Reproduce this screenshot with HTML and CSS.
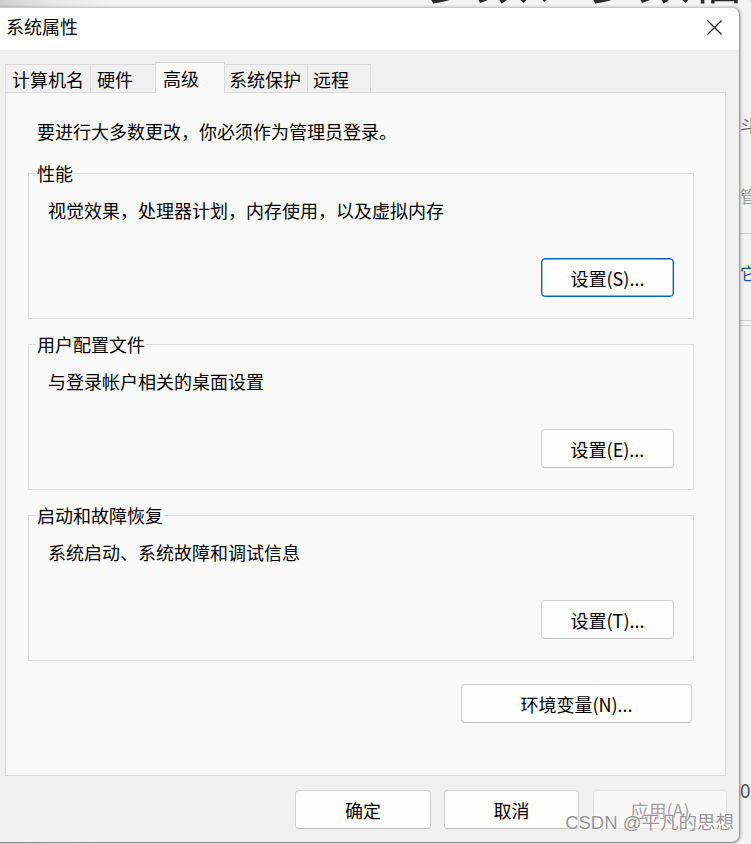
FILE: index.html
```html
<!DOCTYPE html>
<html lang="zh-CN">
<head>
<meta charset="utf-8">
<title>系统属性</title>
<link rel="stylesheet" href="styles.css">
</head>
<body>
<div class="desk">
  <div class="bg-heading">参数、参数信息</div>
  <div class="bg-frag frag-a">斗 目</div>
  <div class="bg-frag frag-b">管</div>
  <div class="bg-line line-a"></div>
  <div class="bg-frag frag-c">它</div>
  <div class="bg-line line-b"></div>
  <div class="bg-line line-c"></div>
  <div class="bg-frag frag-d">0</div>

  <div class="dialog">
    <div class="titlebar">
      <span class="title">系统属性</span>
      <svg class="close" width="15" height="15" viewBox="0 0 15 15"><path d="M0.5 0.5L14.5 14.5M14.5 0.5L0.5 14.5" stroke="#111" stroke-width="1.2" fill="none"/></svg>
    </div>
    <div class="tabs">
      <div class="tab t1">计算机名</div>
      <div class="tab t2">硬件</div>
      <div class="tab t3 active">高级</div>
      <div class="tab t4">系统保护</div>
      <div class="tab t5">远程</div>
    </div>
    <div class="panel">
      <p class="intro">要进行大多数更改，你必须作为管理员登录。</p>
      <fieldset class="group">
        <legend>性能</legend>
        <p class="desc">视觉效果，处理器计划，内存使用，以及虚拟内存</p>
        <button class="btn btn-set default">设置(S)...</button>
      </fieldset>
      <fieldset class="group">
        <legend>用户配置文件</legend>
        <p class="desc">与登录帐户相关的桌面设置</p>
        <button class="btn btn-set">设置(E)...</button>
      </fieldset>
      <fieldset class="group">
        <legend>启动和故障恢复</legend>
        <p class="desc">系统启动、系统故障和调试信息</p>
        <button class="btn btn-set">设置(T)...</button>
      </fieldset>
      <button class="btn btn-env">环境变量(N)...</button>
    </div>
    <div class="footer">
      <button class="btn btn-ok">确定</button>
      <button class="btn btn-cancel">取消</button>
      <button class="btn btn-apply" disabled>应用(A)</button>
    </div>
    <div class="watermark">CSDN @平凡的思想</div>
  </div>
</div>
</body>
</html>
```

FILE: styles.css
```css
html, body {
  margin: 0;
  padding: 0;
}
body {
  width: 751px;
  height: 844px;
  overflow: hidden;
  background: #efefef;
  font-family: "Noto Sans CJK SC", "Noto Sans", sans-serif;
  color: #000;
}
.desk {
  position: relative;
  width: 751px;
  height: 844px;
  overflow: hidden;
  background: linear-gradient(to right, #d0d0d0 0, #e9e9e9 55px, #f3f3f3 110px, #f3f3f3 100%);
}
.bg-heading {
  position: absolute;
  left: 422px;
  top: -49px;
  font-size: 52px;
  line-height: 52px;
  color: #2a2a2a;
  white-space: nowrap;
  letter-spacing: 2px;
}
.bg-frag {
  position: absolute;
  left: 740px;
  font-size: 17px;
  line-height: 22px;
  white-space: nowrap;
}
.frag-a { top: 114px; color: #6a6a6a; }
.frag-b { top: 185px; color: #9a9a9a; }
.frag-c { top: 262px; color: #1f4f9a; }
.frag-d { top: 779px; color: #555; font-size: 19px; }
.bg-line {
  position: absolute;
  left: 740px;
  width: 11px;
  height: 1px;
  background: #cfcfcf;
}
.line-a { top: 233px; }
.line-b { top: 320px; }
.line-c { top: 325px; }

.dialog {
  position: absolute;
  left: -1px;
  top: 7px;
  width: 741px;
  height: 836px;
  box-sizing: border-box;
  border: 1px solid #c8c8c8;
  border-right-color: #9c9c9c;
  border-bottom-color: #8e8e8e;
  border-radius: 0 8px 8px 0;
  background: #f0f0f0;
  overflow: hidden;
  box-shadow: 1px 0 3px rgba(0, 0, 0, 0.25);
}
.titlebar {
  height: 42px;
  box-sizing: border-box;
  background: #fff;
  display: flex;
  justify-content: space-between;
  align-items: flex-start;
  padding: 6px 17px 0 6px;
}
.title {
  font-size: 18px;
  line-height: 24px;
}
.close {
  display: block;
  margin-top: 6px;
}
.tabs {
  display: flex;
  align-items: flex-end;
  height: 42px;
  padding-left: 5px;
}
.tab {
  box-sizing: border-box;
  height: 28px;
  border: 1px solid #d9d9d9;
  border-bottom: none;
  margin-right: -1px;
  background: #f0f0f0;
  font-size: 18px;
  line-height: 24px;
  padding-top: 2px;
  white-space: nowrap;
}
.t1 { width: 86px; padding-left: 6px; }
.t2 { width: 66px; padding-left: 6px; }
.t3 { width: 70px; padding-left: 7px; }
.t4 { width: 84px; padding-left: 4px; }
.t5 { width: 64px; padding-left: 5px; }
.tab.active {
  height: 31px;
  margin-bottom: -1px;
  background: #f9f9f9;
  position: relative;
  z-index: 1;
  padding-top: 3px;
}
.panel {
  box-sizing: border-box;
  margin-left: 5px;
  width: 721px;
  border: 1px solid #dadada;
  background: #f9f9f9;
  padding: 26px 0 52px 0;
  display: flex;
  flex-direction: column;
}
.intro {
  margin: 0 0 0 31px;
  font-size: 18px;
  line-height: 24px;
}
.group {
  box-sizing: border-box;
  width: 666px;
  min-width: 0;
  margin: 19px 0 0 22px;
  border: 1px solid #dcdcdc;
  padding: 13px 0 21px 0;
  display: flex;
  flex-direction: column;
}
.group + .group {
  margin-top: 14px;
}
.group legend {
  margin-left: 7px;
  padding: 0 1px;
  font-size: 18px;
  line-height: 23px;
}
.desc {
  margin: 0 0 0 19px;
  font-size: 18px;
  line-height: 24px;
}
.btn {
  box-sizing: border-box;
  height: 39px;
  padding: 0;
  border: 1px solid #d1d1d1;
  border-bottom-color: #bdbdbd;
  border-radius: 4px;
  background: #fdfdfd;
  font-family: "Noto Sans CJK SC", "Noto Sans", sans-serif;
  font-size: 18px;
  line-height: 24px;
  color: #000;
  white-space: nowrap;
}
.btn.default {
  border: 1px solid #0067c0;
  box-shadow: inset 0 0 0 0.4px #0067c0;
}
.btn-set {
  align-self: flex-end;
  width: 133px;
  margin: 36px 19px 0 0;
}
.btn-env {
  align-self: flex-end;
  width: 231px;
  margin: 23px 33px 0 0;
}
.footer {
  display: flex;
  justify-content: flex-end;
  padding: 14px 12px 0 0;
}
.btn-ok { width: 136px; margin-right: 13px; }
.btn-cancel { width: 135px; margin-right: 14px; }
.btn-apply {
  width: 134px;
  color: #a2a2a2;
  background: #f7f7f7;
  border-color: #e4e4e4;
}
.watermark {
  position: absolute;
  right: 5px;
  bottom: 7px;
  font-family: "Liberation Sans", "Noto Sans CJK SC", sans-serif;
  font-size: 18.5px;
  line-height: 24px;
  color: rgba(120, 120, 120, 0.8);
  text-shadow: 0 0 2px #fff, 0 0 1px #fff;
  white-space: nowrap;
}
```
